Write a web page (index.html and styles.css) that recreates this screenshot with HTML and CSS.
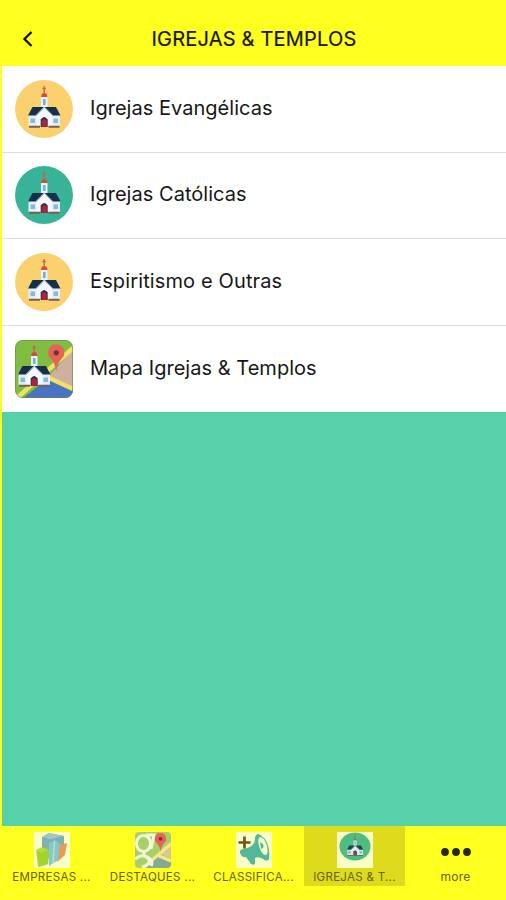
FILE: index.html
```
<!DOCTYPE html>
<html lang="pt-BR">
<head>
    <meta charset="UTF-8">
    <meta name="viewport" content="width=device-width, initial-scale=1.0">
    <title>Igrejas &amp; Templos</title>
    <link rel="stylesheet" href="styles.css">
</head>
<body>
    <svg class="defs" width="0" height="0">
        <symbol id="church" viewBox="0 0 58 58">
            <path d="M29.200 6v9M27.600 8.500h3.200" stroke="#c8643c" stroke-width="1.300"/>
            <path d="M26 17l1-3.500h4.500l1 3.500z" fill="#d84a3c"/>
            <path d="M26 17h6.500v13H26z" fill="#e9f3fa"/>
            <path d="M28 19h2.600v6H28z" fill="#6fb4d6"/>
            <path d="M13.500 34h31.500v12H13.500z" fill="#e6edf5"/>
            <path d="M17.500 27h23.500l4.500 8.500H13z" fill="#16304a"/>
            <path d="M21.500 46V35.500l7.800-8 7.900 8V46z" fill="#f4f7fb"/>
            <path d="M21 35.500l8.300-8.500 8.400 8.500" fill="none" stroke="#c9d9e8"/>
            <path d="M15.500 38.500h4.500v4.500h-4.500zM38.500 38.500h4.500v4.500h-4.500z" fill="#82b9dc"/>
            <path d="M14 45.800h11v2H14zM33.500 45.800h11v2h-11z" fill="#75604f"/>
            <path d="M25.700 47v-7.500q3.500-5 7 0V47z" fill="#23344a"/>
            <path d="M26.700 47v-6.500q2.600-3 5.200 0V47z" fill="#b51f3b"/>
        </symbol>
        <symbol id="pin" viewBox="0 0 16 26">
            <path d="M8 26Q7 18 2.500 13.500A8 8 0 1 1 13.500 13.500Q9 18 8 26z" fill="#e5645a"/>
            <circle cx="8" cy="8" r="2.600" fill="#772f32"/>
        </symbol>
    </svg>

    <div class="app">
        <header class="header">
            <svg class="back" viewBox="0 0 12 18">
                <path d="M9.500 2L2.500 9l7 7" fill="none" stroke="#111" stroke-width="2.300"/>
            </svg>
            <h1>IGREJAS &amp; TEMPLOS</h1>
        </header>

        <main class="content">
            <ul class="list">
                <li class="item">
                    <svg class="icon" viewBox="0 0 58 58">
                        <circle cx="29" cy="29" r="29" fill="#fbd16f"/>
                        <use href="#church"/>
                    </svg>
                    <span>Igrejas Evangélicas</span>
                </li>
                <li class="item">
                    <svg class="icon" viewBox="0 0 58 58">
                        <circle cx="29" cy="29" r="29" fill="#38b397"/>
                        <use href="#church"/>
                    </svg>
                    <span>Igrejas Católicas</span>
                </li>
                <li class="item">
                    <svg class="icon" viewBox="0 0 58 58">
                        <circle cx="29" cy="29" r="29" fill="#fbd16f"/>
                        <use href="#church"/>
                    </svg>
                    <span class="wide">Espiritismo e Outras</span>
                </li>
                <li class="item">
                    <svg class="icon icon-map" viewBox="0 0 58 58">
                        <path d="M0 0h58v58H0z" fill="#80bd43"/>
                        <path d="M58 10v38L34 36z" fill="#cdb09e"/>
                        <path d="M8 58l26-20 24 12v8z" fill="#4775c4"/>
                        <path d="M2 58L58 8M32 37l26 12" stroke="#f5e066" stroke-width="4.500"/>
                        <use href="#pin" x="33" y="4" width="16.500" height="28"/>
                        <use href="#church" x="-10" y="-1"/>
                        <rect x=".5" y=".5" width="57" height="57" rx="7" fill="none" stroke="#708150" stroke-opacity=".6"/>
                    </svg>
                    <span>Mapa Igrejas &amp; Templos</span>
                </li>
            </ul>
        </main>

        <nav class="tabs">
            <a class="tab">
                <svg class="tab-icon" viewBox="0 0 36 36">
                    <path d="M0 0h36v36H0z" fill="#faffc8"/>
                    <path d="M8 5l7-4 15 3v17l-10 8L8 23z" fill="#7fb1b3"/>
                    <path d="M8 5l8 2 14-3-15-3z" fill="#9dc8c8"/>
                    <path d="M24 13l9-2-2 12-8 7z" fill="#e99a5a"/>
                    <path d="M15 11l6-3 5 4-2 16-9 6z" fill="#84c9c6"/>
                    <path d="M20.500 9L19 31" stroke="#b4e0d5" stroke-width="1.500"/>
                    <path d="M2 18l6-3 7 3-1 14-10 3z" fill="#b5de30"/>
                    <path d="M3 19l4 2 8-3-1 14-9 3z" fill="#a2d32e"/>
                </svg>
                <span>EMPRESAS ...</span>
            </a>
            <a class="tab">
                <svg class="tab-icon tab-map" viewBox="0 0 36 36">
                    <path d="M0 0h36v36H0z" fill="#a9d068"/>
                    <path d="M23 20L36 9v18z" fill="#dcc88c"/>
                    <path d="M9 36l14-14 13 7v7z" fill="#85aa90"/>
                    <path d="M8 36L36 12M22 23l14 6" stroke="#f3e98b" stroke-width="3"/>
                    <g fill="none" stroke="#f2f8d7" stroke-width="3">
                        <ellipse cx="8.500" cy="11.500" rx="7" ry="8"/>
                        <path d="M11 3h8l-3 14M10 20q-3 3 2 5 7 3 4 9M0 27q9-7 14 1 2 5-7 7"/>
                    </g>
                    <use href="#pin" x="19.500" y="1" width="12" height="19"/>
                </svg>
                <span>DESTAQUES ...</span>
            </a>
            <a class="tab">
                <svg class="tab-icon" viewBox="0 0 36 36">
                    <path d="M0 0h36v36H0z" fill="#faffc8"/>
                    <path d="M4 21q-1-3 3-4 12-2 12-10 0-5 4-5 12 7 10 25-2 3-6 0-5-3-8-1v5q0 3-4 1l-5-7q-4 1-6-4z" fill="#52b898"/>
                    <ellipse cx="27" cy="14" rx="3.800" ry="9.500" transform="rotate(-18 27 14)" fill="#faffc8"/>
                    <path d="M24 10q5 2 3 6l-2 1z" fill="#52b898"/>
                    <path d="M8.500 4.500v12M2.500 10.500h12" stroke="#705515" stroke-width="2.700"/>
                </svg>
                <span>CLASSIFICA...</span>
            </a>
            <a class="tab active">
                <svg class="tab-icon" viewBox="0 0 36 36">
                    <path d="M0 0h36v36H0z" fill="#faffc8"/>
                    <ellipse cx="18" cy="14.500" rx="15.500" ry="14" fill="#4fbd80"/>
                    <use href="#church" x="2" y="0" width="32" height="29" opacity=".85"/>
                </svg>
                <span>IGREJAS &amp; T...</span>
            </a>
            <a class="tab more">
                <svg class="tab-icon" viewBox="0 0 36 36">
                    <g fill="#292900">
                        <circle cx="7" cy="20" r="3.900"/>
                        <circle cx="18" cy="20" r="3.900"/>
                        <circle cx="29" cy="20" r="3.900"/>
                    </g>
                </svg>
                <span>more</span>
            </a>
        </nav>
    </div>
</body>
</html>
```
FILE: styles.css
```
* {
    box-sizing: border-box;
}
body {
    margin: 0;
    font-family: Inter, "Liberation Sans", sans-serif;
    background-color: #ffff20;
}
.defs {
    position: absolute;
}
.app {
    display: flex;
    flex-direction: column;
    height: 900px;
}
.header {
    display: grid;
    grid-template-columns: 56px 1fr 56px;
    align-items: center;
    height: 66px;
    padding-top: 12px;
}
.back {
    width: 12px;
    height: 18px;
    margin-left: 22px;
}
.header h1 {
    margin: 0;
    padding-left: 2px;
    font-size: 20px;
    font-weight: 400;
    letter-spacing: 0.2px;
    text-align: center;
    white-space: nowrap;
    color: #17170a;
    -webkit-text-stroke: 0.2px #17170a;
}
.content {
    flex: 1;
    margin-left: 2px;
    background-color: #57d1a9;
}
.list {
    margin: 0;
    padding: 0;
    list-style: none;
}
.item {
    display: flex;
    align-items: center;
    gap: 17px;
    height: 86.6px;
    padding-left: 13px;
    font-size: 20px;
    color: #171717;
    background-color: white;
    border-bottom: 1px solid #dedede;
}
.item:last-child {
    border-bottom: none;
}
.item span {
    padding-bottom: 2px;
    letter-spacing: 0.03px;
}
.item .wide {
    letter-spacing: 0.13px;
}
.icon {
    width: 58px;
    height: 58px;
}
.icon-map {
    border-radius: 8px;
}
.tabs {
    display: flex;
    height: 74px;
    padding-left: 1px;
}
.tab {
    display: flex;
    flex: 1;
    flex-direction: column;
    align-items: center;
    height: 60px;
    padding-top: 6px;
    font-size: 11.5px;
    line-height: 16px;
    letter-spacing: 0.3px;
    white-space: nowrap;
    color: #66620c;
}
.tab-icon {
    width: 36px;
    height: 36px;
    margin-bottom: 1px;
}
.tab-map {
    border-radius: 4px;
}
.active {
    background-color: #dddb1b;
}
.more {
    font-size: 12px;
}
```
